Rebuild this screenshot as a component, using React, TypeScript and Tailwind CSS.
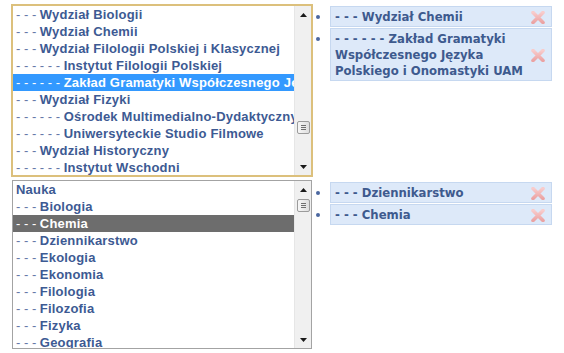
import React from 'react';

type Opt = { depth: number; label: string };

const FACULTIES: Opt[] = [
  { depth: 1, label: 'Wydział Biologii' },
  { depth: 1, label: 'Wydział Chemii' },
  { depth: 1, label: 'Wydział Filologii Polskiej i Klasycznej' },
  { depth: 2, label: 'Instytut Filologii Polskiej' },
  { depth: 2, label: 'Zakład Gramatyki Współczesnego Języka Polskiego i Onomastyki UAM' },
  { depth: 1, label: 'Wydział Fizyki' },
  { depth: 2, label: 'Ośrodek Multimedialno-Dydaktyczny' },
  { depth: 2, label: 'Uniwersyteckie Studio Filmowe' },
  { depth: 1, label: 'Wydział Historyczny' },
  { depth: 2, label: 'Instytut Wschodni' },
];

const DISCIPLINES: Opt[] = [
  { depth: 0, label: 'Nauka' },
  { depth: 1, label: 'Biologia' },
  { depth: 1, label: 'Chemia' },
  { depth: 1, label: 'Dziennikarstwo' },
  { depth: 1, label: 'Ekologia' },
  { depth: 1, label: 'Ekonomia' },
  { depth: 1, label: 'Filologia' },
  { depth: 1, label: 'Filozofia' },
  { depth: 1, label: 'Fizyka' },
  { depth: 1, label: 'Geografia' },
];

const dashes = (depth: number) => (depth === 0 ? '' : '- - - '.repeat(depth));

const Scrollbar: React.FC<{ thumbGap: string }> = ({ thumbGap }) => (
  <div className="w-[17px] shrink-0 h-full bg-[#f0f0f0] border-l border-[#e6e6e6] flex flex-col items-center">
    <div className="h-[17px] w-full flex items-center justify-center">
      <svg width="7" height="4" viewBox="0 0 7 4">
        <path d="M3.5 0 L7 4 L0 4 Z" fill="#1a1a1a" />
      </svg>
    </div>
    <div className={`${thumbGap} w-[13px] h-[13px] rounded-[2px] border border-[#9b9b9b] bg-gradient-to-r from-[#f7f7f7] to-[#dedede] flex flex-col items-center justify-center gap-[1px]`}>
      <div className="w-[5px] h-px bg-[#6f6f6f]" />
      <div className="w-[5px] h-px bg-[#6f6f6f]" />
      <div className="w-[5px] h-px bg-[#6f6f6f]" />
    </div>
    <div className="flex-1" />
    <div className="h-[17px] w-full flex items-center justify-center">
      <svg width="7" height="4" viewBox="0 0 7 4">
        <path d="M0 0 L7 0 L3.5 4 Z" fill="#1a1a1a" />
      </svg>
    </div>
  </div>
);

const ListBox: React.FC<{
  options: Opt[];
  selected: number;
  focused: boolean;
  thumbGap: string;
}> = ({ options, selected, focused, thumbGap }) => (
  <div
    className={
      focused
        ? 'w-[302px] h-[173px] border-2 border-[#dcc07c] bg-white flex overflow-hidden'
        : 'ml-px w-[300px] h-[169px] border border-[#a3a3a3] bg-white flex overflow-hidden'
    }
  >
    <div className="flex-1 min-w-0 overflow-hidden font-['Liberation_Sans',Arial,sans-serif] text-[13px] leading-[17px]">
      {options.map((o, i) => {
        const isSel = i === selected;
        const rowCls = isSel
          ? focused
            ? 'bg-[#3399ff] text-white'
            : 'bg-[#6d6d6d] text-white'
          : 'text-[#3d5a93]';
        return (
          <div key={i} className={`h-[17px] pl-[3px] whitespace-nowrap ${rowCls}`}>
            <span className={isSel ? '' : 'text-[#6479a8]'}>{dashes(o.depth)}</span>
            <span className="font-bold tracking-[0.2px]">{o.label}</span>
          </div>
        );
      })}
    </div>
    <Scrollbar thumbGap={thumbGap} />
  </div>
);

const RemoveIcon = () => (
  <svg width="14" height="13" viewBox="0 0 14 13" className="shrink-0">
    <defs>
      <linearGradient id="xg" x1="0" y1="0" x2="0" y2="1">
        <stop offset="0" stopColor="#f8cccc" />
        <stop offset="1" stopColor="#eba3a3" />
      </linearGradient>
    </defs>
    <path d="M2 1.5 L12 11.5 M12 1.5 L2 11.5" stroke="url(#xg)" strokeWidth="3.6" strokeLinecap="round" />
  </svg>
);

const Tags: React.FC<{ items: string[] }> = ({ items }) => (
  <ul className="mt-[2px] flex flex-col gap-px font-['DejaVu_Sans',Verdana,sans-serif] text-[11.7px] leading-[16px] font-bold text-[#3e5a8e]">
    {items.map((t) => (
      <li key={t} className="flex items-start">
        <span className="ml-[3px] mt-[9px] w-[4px] h-[4px] rounded-full bg-[#4b67a0] shrink-0" />
        <div className="ml-[10px] w-[222px] border border-[#c6d8f0] bg-[#dde9f9] pl-[4px] pr-[6px] pt-[2px] pb-px flex items-center">
          <span className="w-[196px]">{t}</span>
          <div className="flex-1" />
          <RemoveIcon />
        </div>
      </li>
    ))}
  </ul>
);

export default function App() {
  return (
    <div className="w-[564px] h-[353px] bg-white pl-[11px] pt-[4px] flex flex-col gap-[3px] overflow-hidden">
      <div className="flex items-start">
        <ListBox options={FACULTIES} selected={4} focused thumbGap="mt-[98px]" />
        <Tags
          items={[
            '- - - Wydział Chemii',
            '- - - - - - Zakład Gramatyki Współczesnego Języka Polskiego i Onomastyki UAM',
          ]}
        />
      </div>
      <div className="flex items-start">
        <div className="w-[302px]">
          <ListBox options={DISCIPLINES} selected={2} focused={false} thumbGap="mt-px" />
        </div>
        <Tags items={['- - - Dziennikarstwo', '- - - Chemia']} />
      </div>
    </div>
  );
}
